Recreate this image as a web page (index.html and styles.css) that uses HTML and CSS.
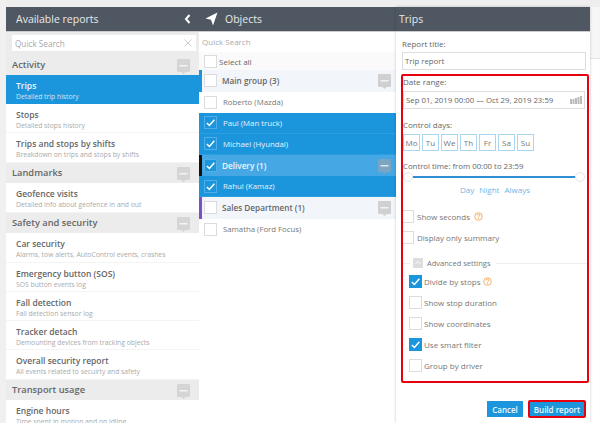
FILE: index.html
```html
<!DOCTYPE html>
<html lang="en">
  <head>
    <meta charset="UTF-8">
    <meta name="viewport" content="width=device-width, initial-scale=1">
    <title>Trips report</title>
    <link rel="stylesheet" href="styles.css">
  </head>
  <body>
    <svg class="sprites" width="0" height="0" aria-hidden="true">
      <symbol id="i-bubble" viewBox="0 0 13 15">
        <path d="M0 1a1 1 0 0 1 1-1h11a1 1 0 0 1 1 1v11a1 1 0 0 1-1 1H8.500l-2 2-2-2H1a1 1 0 0 1-1-1z" fill="currentColor"/>
        <rect x="2.500" y="6" width="8" height="1.500" fill="#fff" fill-opacity=".75"/>
      </symbol>
      <symbol id="i-check" viewBox="0 0 12 12">
        <path d="M2 6.500l2.800 2.800L10.200 3" fill="none" stroke="#fff" stroke-width="1.600"/>
      </symbol>
      <symbol id="i-help" viewBox="0 0 9 9">
        <circle cx="4.500" cy="4.500" r="3.800" fill="none" stroke="#f5b06b"/>
        <path d="M3.200 3.500a1.300 1.300 0 1 1 1.900 1.100c-.4.200-.6.400-.6.900M4.500 6.200v.9" fill="none" stroke="#f0a050" stroke-width=".9"/>
      </symbol>
    </svg>

    <div class="page">

      <section class="panel panel-reports">
        <div class="panel-head">
          <span>Available reports</span>
          <svg class="head-back" width="7" height="10" viewBox="0 0 7 10"><path d="M5.500 1L2 5l3.500 4" fill="none" stroke="#fff" stroke-width="2"/></svg>
        </div>
        <div class="search-strip">
          <div class="search-box">
            <span>Quick Search</span>
            <svg width="8" height="8" viewBox="0 0 8 8"><path d="M.5.5l7 7M7.500.5l-7 7" stroke="#ccc"/></svg>
          </div>
        </div>

        <div class="section">Activity <svg class="bubble"><use href="#i-bubble"/></svg></div>
        <div class="report report-active"><b>Trips</b><small>Detailed trip history</small></div>
        <div class="report"><b>Stops</b><small>Detailed stops history</small></div>
        <div class="report"><b>Trips and stops by shifts</b><small>Breakdown on trips and stops by shifts</small></div>

        <div class="section">Landmarks <svg class="bubble"><use href="#i-bubble"/></svg></div>
        <div class="report"><b>Geofence visits</b><small>Detailed info about geofence in and out</small></div>

        <div class="section">Safety and security <svg class="bubble"><use href="#i-bubble"/></svg></div>
        <div class="report"><b>Car security</b><small>Alarms, tow alerts, AutoControl events, crashes</small></div>
        <div class="report"><b>Emergency button (SOS)</b><small>SOS button events log</small></div>
        <div class="report"><b>Fall detection</b><small>Fall detection sensor log</small></div>
        <div class="report"><b>Tracker detach</b><small>Demounting devices from tracking objects</small></div>
        <div class="report"><b>Overall security report</b><small>All events related to secuirty and safety</small></div>

        <div class="section">Transport usage <svg class="bubble"><use href="#i-bubble"/></svg></div>
        <div class="report"><b>Engine hours</b><small>Time spent in motion and on idling</small></div>
      </section>

      <section class="panel panel-objects">
        <div class="panel-head">
          <svg class="head-arrow" width="13" height="14" viewBox="0 0 13 14"><path d="M12.500.5L.5 6.500l5.500 1.200L8 13.500z" fill="#fff"/></svg>
          <span>Objects</span>
        </div>
        <div class="objects-search">Quick Search</div>

        <div class="obj obj-all"><i class="box"></i>Select all</div>
        <div class="obj obj-group group-blue"><i class="box"></i><b>Main group (3)</b><svg class="bubble"><use href="#i-bubble"/></svg></div>
        <div class="obj"><i class="box"></i>Roberto (Mazda)</div>
        <div class="obj obj-on"><i class="box"><svg><use href="#i-check"/></svg></i>Paul (Man truck)</div>
        <div class="obj obj-on"><i class="box"><svg><use href="#i-check"/></svg></i>Michael (Hyundai)</div>
        <div class="obj obj-group obj-group-on group-black"><i class="box"><svg><use href="#i-check"/></svg></i><b>Delivery (1)</b><svg class="bubble"><use href="#i-bubble"/></svg></div>
        <div class="obj obj-on"><i class="box"><svg><use href="#i-check"/></svg></i>Rahul (Kamaz)</div>
        <div class="obj obj-group group-purple"><i class="box"></i><b>Sales Department (1)</b><svg class="bubble"><use href="#i-bubble"/></svg></div>
        <div class="obj"><i class="box"></i>Samatha (Ford Focus)</div>
      </section>

      <section class="panel panel-form">
        <div class="panel-head"><span>Trips</span></div>
        <div class="form">
          <label class="lbl lbl-title">Report title:</label>
          <div class="field">Trip report</div>

          <div class="marked">
            <label class="lbl">Date range:</label>
            <div class="field field-date">
              <span>Sep 01, 2019 00:00 — Oct 29, 2019 23:59</span>
              <svg width="12" height="8" viewBox="0 0 12 8"><path d="M0 3h2v5H0zM2.500 3h2v5h-2zM5 2h2v6H5zM7.500 1h2v7h-2zM10 0h2v8h-2z" fill="#bbb"/></svg>
            </div>

            <label class="lbl lbl-days">Control days:</label>
            <div class="days">
              <span>Mo</span><span>Tu</span><span>We</span><span>Th</span><span>Fr</span><span>Sa</span><span>Su</span>
            </div>

            <label class="lbl lbl-time">Control time: from 00:00 to 23:59</label>
            <div class="slider"><i></i><i></i></div>
            <div class="presets"><span>Day</span><span>Night</span><span>Always</span></div>

            <div class="opts opts-main">
              <div class="opt"><i class="box"></i>Show seconds <svg class="help"><use href="#i-help"/></svg></div>
              <div class="opt"><i class="box"></i>Display only summary</div>
            </div>

            <div class="advanced">
              <i class="adv-toggle"><svg width="10" height="10" viewBox="0 0 10 10"><path d="M2.500 6L5 3.500 7.500 6" fill="none" stroke="#fff"/></svg></i><span>Advanced settings</span>
            </div>

            <div class="opts opts-adv">
              <div class="opt"><i class="box box-on"><svg><use href="#i-check"/></svg></i>Divide by stops <svg class="help"><use href="#i-help"/></svg></div>
              <div class="opt"><i class="box"></i>Show stop duration</div>
              <div class="opt"><i class="box"></i>Show coordinates</div>
              <div class="opt"><i class="box box-on"><svg><use href="#i-check"/></svg></i>Use smart filter</div>
              <div class="opt"><i class="box"></i>Group by driver</div>
            </div>
          </div>

          <div class="actions">
            <button class="btn btn-cancel" type="button">Cancel</button>
            <button class="btn btn-marked" type="button">Build report</button>
          </div>
        </div>
      </section>

    </div>
  </body>
</html>
```

FILE: styles.css
```css
html, body { margin: 0; height: 423px; overflow: hidden }
body { font-family: "Open Sans", "Liberation Sans", sans-serif; background: #fff; color: #666 }

.sprites { position: absolute }

.page {
  display: grid;
  grid-template-columns: 193px 197px 194px;
  height: 416px;
  padding: 7px 0 0 6px;
  background:
    linear-gradient(90deg, #f0f0f0 6px, transparent 6px),
    linear-gradient(#eee 7px, #f6f6f6 7px, #f6f6f6 58px, #e6e6e6 58px, #e6e6e6 59px, #fff 59px);
}

.panel { overflow: hidden; min-width: 0; background: #fff }

.panel-head {
  display: flex;
  align-items: center;
  height: 24px;
  padding-left: 10px;
  background: #4f5862;
  border-bottom: 1px solid #ccc;
  color: #e8e9ea;
  font-size: 10.5px;
}

.head-back { margin-left: auto; margin-right: 8px }
.head-arrow { margin-right: 7px; margin-left: -1px }

/* left panel */

.search-strip { height: 22px; padding: 3px 3px 0 6px; box-sizing: border-box; background: #ececec }
.search-box {
  display: flex;
  align-items: center;
  justify-content: space-between;
  height: 16px;
  padding: 0 4px 0 3px;
  background: #fff;
  color: #aaa;
  font-size: 8.2px;
}

.section {
  display: flex;
  align-items: center;
  justify-content: space-between;
  height: 20.75px;
  padding: 0 9px 0 6px;
  box-sizing: border-box;
  background: #ececec;
  color: #666;
  font-size: 9.3px;
  font-weight: 600;
}

.bubble { width: 13px; height: 15px; margin-top: 4px; color: #d5d5d5 }

.report {
  display: flex;
  flex-direction: column;
  height: 29.25px;
  padding: 4px 0 0 10px;
  box-sizing: border-box;
  background: #fff;
  border-bottom: 1px solid #f4f4f4;
}
.report b { font-size: 8.5px; font-weight: 600; line-height: 13px; color: #666 }
.report small { font-size: 6.8px; line-height: 10px; color: #aaa; white-space: nowrap }
.report-active { background: #1b96dd; border-color: #1b96dd }
.report-active b { color: #eef6fc }
.report-active small { color: #cfe6f6 }

/* middle panel */

.panel-objects .panel-head { padding-left: 7px }

.objects-search { height: 20px; padding: 4px 0 0 3px; box-sizing: border-box; font-size: 8px; color: #aaa }

.obj {
  display: flex;
  align-items: center;
  height: 21px;
  padding-left: 5px;
  box-sizing: border-box;
  font-size: 7.8px;
  color: #777;
}
.obj .box { margin-right: 6px }

.obj-all { height: 18px; background: #fafafa; color: #666; font-size: 8px }
.obj-all .box { margin-right: 2px }

.obj-group { height: 21.5px; padding-left: 2px; border-left: 3px solid; background: #f2f6fa; font-size: 8.2px; color: #666 }
.obj-group b { font-weight: 600 }
.obj-group .box { margin-right: 5px }
.obj-group .bubble { margin-left: auto; margin-right: 5px; margin-top: 2px; color: #d0d0d0 }

.group-blue { border-color: #1b96dd }
.group-black { border-color: #111 }
.group-purple { border-color: #7d4fc4 }

.obj-on { background: #1b96dd; color: #e6f3fb; border-bottom: 1px solid #2a9ee0 }
.obj-on .box, .obj-group-on .box { background: #1b96dd; border-color: #52aee6 }
.obj-group-on { background: #45a8e5; color: #eef6fc }
.obj-group-on .bubble { color: #7aa6c4 }

.box {
  display: inline-block;
  flex: none;
  width: 11px;
  height: 11px;
  background: #fff;
  border: 1px solid #dcdcdc;
}
.box svg { display: block; width: 11px; height: 11px }
.box-on { background: #1b96dd; border-color: #1b96dd }

/* right panel */

.panel-form { box-shadow: 0 0 3px rgba(0, 0, 0, .2) }
.panel-form .panel-head { padding-left: 3px }

.form { padding: 6px 1px 0 5px }

.lbl { display: block; font-size: 8px; line-height: 12px; color: #666 }
.lbl-title { padding-left: 1px; margin-bottom: 2px }
.lbl-days { margin-top: 10px; margin-bottom: 3px }
.lbl-time { margin-top: 9px; font-size: 7.8px }

.field {
  display: flex;
  align-items: center;
  justify-content: space-between;
  height: 16px;
  padding: 0 2px;
  margin: 0 3px 0 1px;
  background: #fff;
  border: 1px solid #ddd;
  font-size: 7.8px;
  color: #666;
}

.marked {
  height: 305px;
  margin-top: 4px;
  border: 2px solid #e8000d;
  border-radius: 2px;
}
.field-date { margin: 3px 2px 0 0 }

.days { display: flex; gap: 2px }
.days span {
  width: 15px;
  height: 15px;
  line-height: 15px;
  text-align: center;
  border: 1px solid #a9d6f2;
  font-size: 8px;
  color: #777;
}

.slider {
  position: relative;
  height: 2px;
  margin: 4px 7px 0 5px;
  background: #2f8fd0;
}
.slider i {
  position: absolute;
  top: -4px;
  left: -5px;
  width: 8px;
  height: 8px;
  border: 1px solid #e4e4e4;
  border-radius: 50%;
  background: #fff;
}
.slider i + i { left: auto; right: -5px }

.presets { display: flex; justify-content: center; gap: 5px; margin-top: 6px; font-size: 8px; line-height: 12px; color: #6fb6e6 }

.opts { display: flex; flex-direction: column; gap: 9px }
.opts-main { margin-top: 14px }
.opts-main .box { width: 10px; border-left: 0 }
.opts-adv { margin-top: 7px; margin-left: 6px }

.opt { display: flex; align-items: center; gap: 3px; height: 12px; font-size: 8px; color: #777 }
.opts-adv .opt { gap: 2px }
.help { width: 9px; height: 9px; margin-left: 1px }

.advanced {
  display: flex;
  align-items: center;
  gap: 4px;
  height: 10px;
  margin-top: 15px;
  padding-left: 10px;
  font-size: 7.5px;
  color: #777;
  background: linear-gradient(#eee, #eee) 0 4.5px / 100% 1px no-repeat;
}
.advanced span { padding-right: 6px; background: #fff }
.adv-toggle { width: 10px; height: 10px; background: #ddd; box-shadow: 0 0 0 3px #fff }
.adv-toggle svg { display: block }

.actions { display: flex; justify-content: flex-end; align-items: center; gap: 5px; margin-top: 17px; padding-right: 3px }

.btn {
  height: 16px;
  padding: 0;
  border: 0;
  background: #1b96dd;
  color: #eef6fc;
  font-family: inherit;
  font-size: 8px;
  font-weight: 600;
}
.btn-cancel { width: 36px }
.btn-marked { width: 58px; height: 18px; border: 2px solid #e8000d; border-radius: 2px }
```
